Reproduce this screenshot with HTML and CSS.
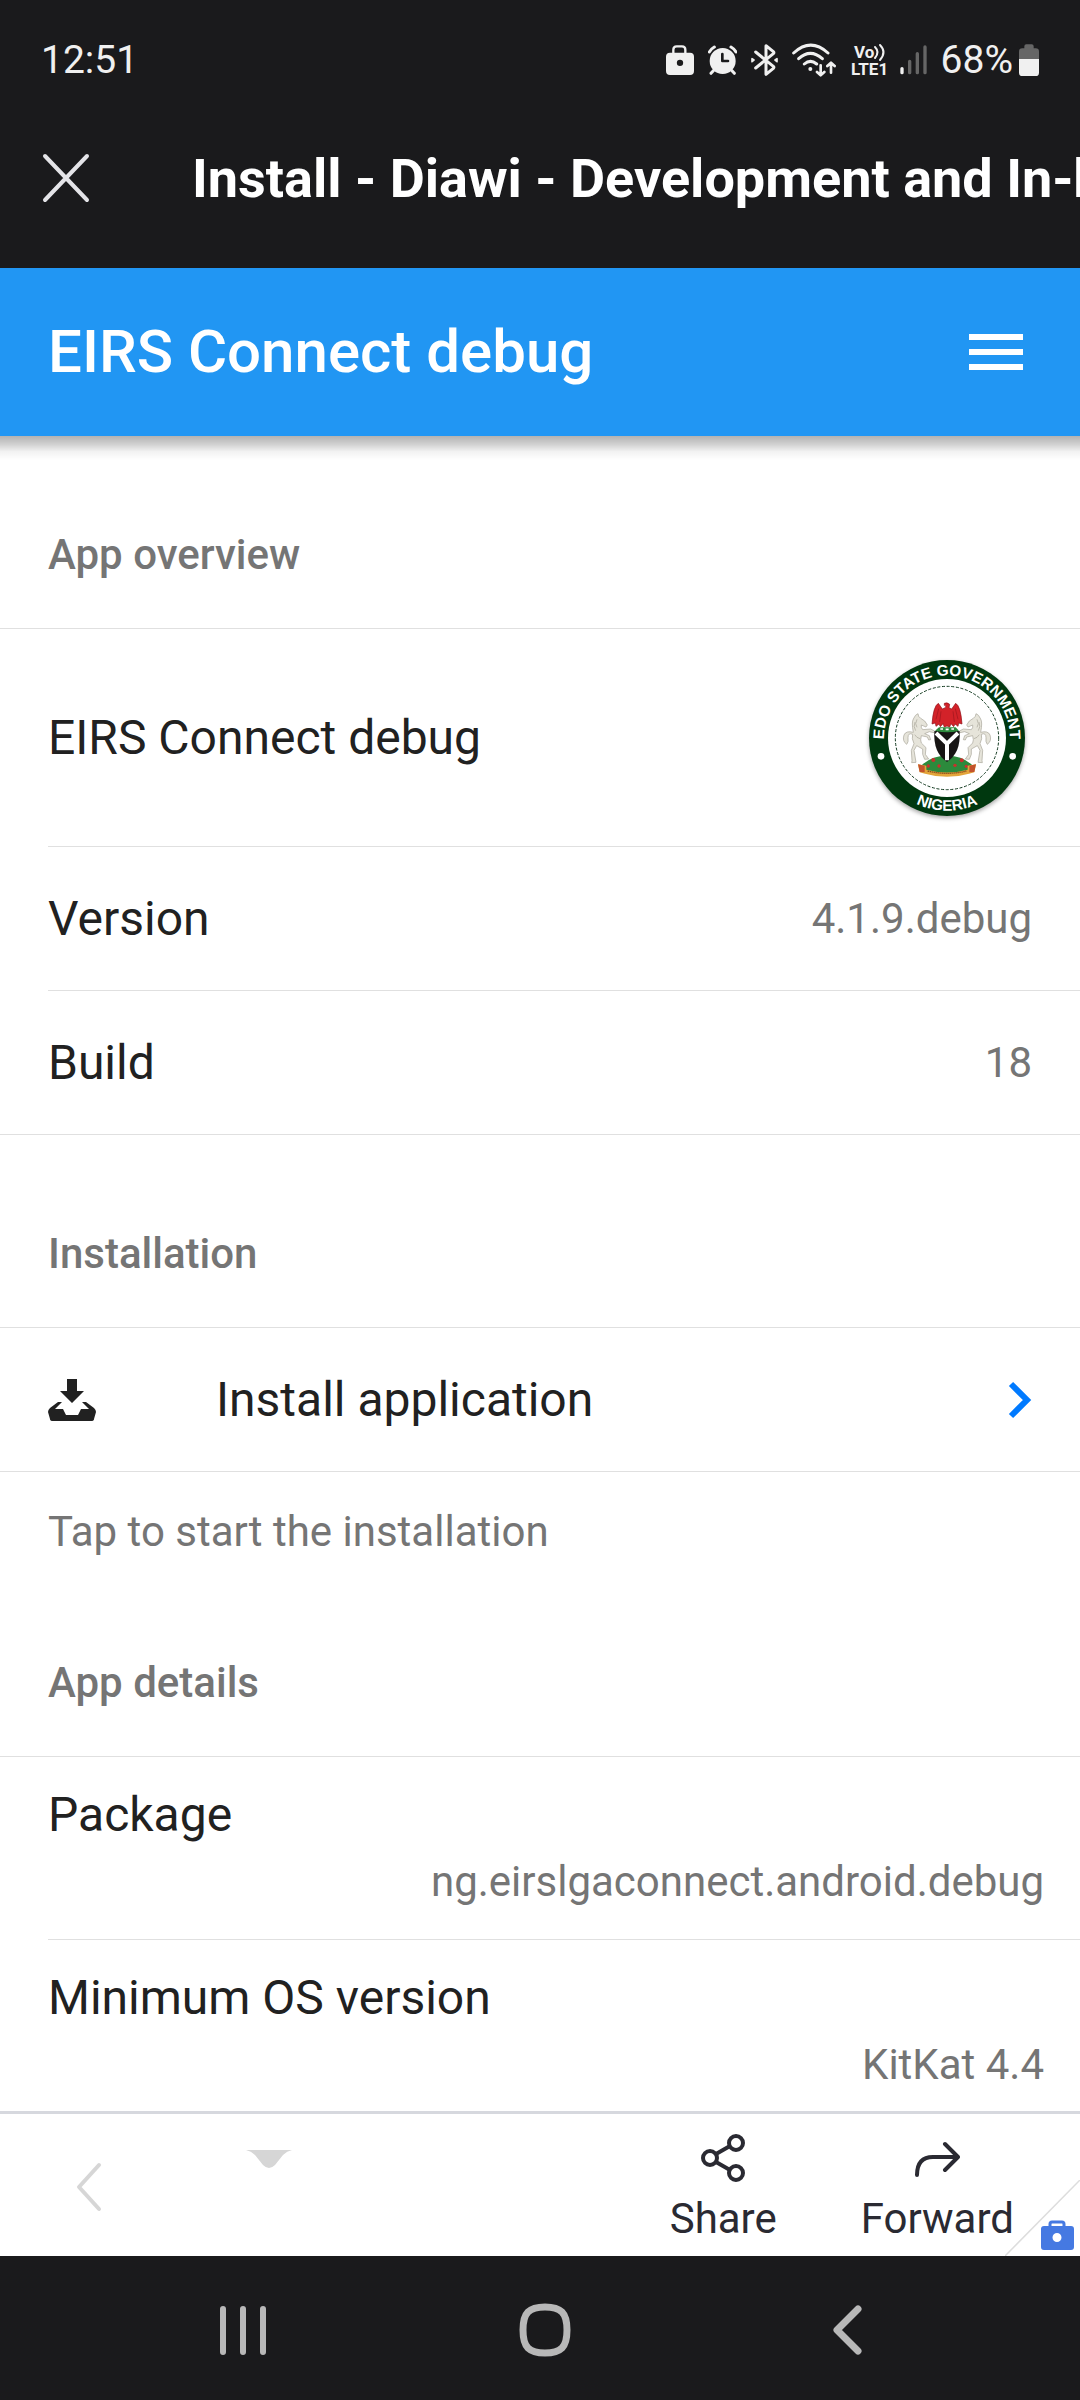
FILE: index.html
```html
<!DOCTYPE html>
<html lang="en">

<head>
  <meta charset="UTF-8" />
  <meta name="viewport" content="width=device-width, initial-scale=1.0" />
  <title>Install - Diawi - Development and In-house Apps Wireless Installation</title>
  <link rel="stylesheet" href="styles.css">
</head>

<body>
  <div class="status-bar">
    <span class="status-time">12:51</span>
    <div class="status-icons">
      <!-- work profile -->
      <svg width="28" height="30" viewBox="75 78 84 90" fill="none">
        <path d="M97 104V92q0-10 10-10h16q10 0 10 10v12" stroke="#f0f0f0" stroke-width="7" />
        <path fill="#f0f0f0" fill-rule="evenodd" d="M87 101h60q12 0 12 12v43q0 12-12 12H87q-12 0-12-12v-43q0-12 12-12zM117 122a9.500 9.500 0 1 0 0 19a9.500 9.500 0 1 0 0-19z" />
      </svg>
      <!-- alarm -->
      <svg width="29" height="30" viewBox="204 78 87 90" fill="none" stroke-linecap="round">
        <circle cx="248" cy="126" r="39" fill="#f0f0f0" />
        <path d="M208 99q6-10 15-15M273 84q9 5 15 15M220 155l-7 8M276 155l7 8" stroke="#f0f0f0" stroke-width="9" />
        <path d="M247 105v21h17" stroke="#1a1a1c" stroke-width="8" stroke-linejoin="round" />
      </svg>
      <!-- bluetooth -->
      <svg width="27" height="32" viewBox="338 74 81 96" fill="none" stroke="#f0f0f0" stroke-width="9" stroke-linejoin="round" stroke-linecap="round">
        <path d="M352 98l53 43q3 3 0 6l-22 18V79l22 18q3 3 0 6l-53 43" />
        <path d="M341 118v9l6-5zM416 118v9l-6-5z" stroke-width="5" fill="#f0f0f0" />
      </svg>
      <!-- wifi -->
      <svg width="44" height="34" viewBox="461 70 132 102" fill="none" stroke="#f0f0f0" stroke-linecap="round" stroke-linejoin="round">
        <path d="M466 100q51-47 103 0M481 117q35-32 71 0M498 133q18-16 37 0" stroke-width="9" />
        <circle cx="516" cy="148" r="6" fill="#f0f0f0" stroke="none" />
        <path d="M547 137v29M536 157l11 10l11-10M578 159v-29M567 139l11-10l11 10" stroke-width="8" />
      </svg>
      <!-- volte -->
      <svg class="volte" width="40" height="44" viewBox="0 -5 40 44" fill="#f0f0f0">
        <text x="4" y="15">Vo</text>
        <path d="M25 4q5 5 0 11M30 2q7 7 0 15" fill="none" stroke="#f0f0f0" stroke-width="2" stroke-linecap="round" />
        <text x="1" y="32">LTE1</text>
      </svg>
      <!-- signal -->
      <svg width="27" height="30" viewBox="774 77 81 90" stroke-width="10" stroke-linecap="round">
        <path d="M780 148v12" stroke="#f0f0f0" />
        <path d="M803 126v34M826 103v57M849 83v77" stroke="#666" />
      </svg>
      <div class="battery">
        <span>68%</span>
        <svg width="20" height="32" viewBox="1137 75 60 96">
          <path d="M1137 120V98q0-10 10-10h6v-6q0-6 6-6h16q6 0 6 6v6h6q10 0 10 10v22z" fill="#666" />
          <path d="M1137 120h60v41q0 10-10 10h-40q-10 0-10-10z" fill="#f0f0f0" />
        </svg>
      </div>
    </div>
  </div>

  <header class="title-bar">
    <button class="icon-btn" aria-label="Close">
      <svg width="48" height="50" viewBox="0 0 48 50" fill="none" stroke="#e4e4e8" stroke-width="4" stroke-linecap="round">
        <path d="M3 3l42 44M45 3L3 47" />
      </svg>
    </button>
    <p class="page-title">Install - Diawi - Development and In-house Apps Wireless Installation</p>
  </header>

  <nav class="navbar">
    <h1 class="navbar-title">EIRS Connect debug</h1>
    <button class="icon-btn" aria-label="Menu">
      <svg width="54" height="36" viewBox="0 0 54 36" fill="#fff">
        <path d="M0 0h54v6H0zM0 15h54v6H0zM0 30h54v6H0z" />
      </svg>
    </button>
  </nav>

  <main class="content">
    <h2 class="block-title">App overview</h2>
    <ul class="list">
      <li class="item item-app">
        <span>EIRS Connect debug</span>
        <svg class="app-logo" width="164" height="164" viewBox="0 0 492 492">
          <defs>
            <path id="ring-top" d="M63 295a189 189 0 1 1 366 0" />
            <path id="ring-bottom" d="M28 246a218 218 0 0 0 436 0" />
          </defs>
          <circle class="logo-shadow" cx="246" cy="246" r="234" fill="#00380f" />
          <circle cx="246" cy="246" r="177" fill="#fff" />
          <circle cx="246" cy="246" r="155" fill="none" stroke="#12391f" stroke-width="3" stroke-dasharray="9 5" />
          <g fill="#fff" class="logo-text" text-anchor="middle">
            <text><textPath href="#ring-top" startOffset="50%">EDO STATE GOVERNMENT</textPath></text>
            <text><textPath href="#ring-bottom" startOffset="50%">NIGERIA</textPath></text>
          </g>
          <circle cx="48" cy="301" r="10" fill="#fff" />
          <circle cx="443" cy="301" r="10" fill="#fff" />
          <!-- ground and banner -->
          <path d="M164 334q30-35 82-35t82 35q-15 26-82 24q-67 2-82-24z" fill="#2c8a3c" />
          <g fill="#c9302c">
            <circle cx="205" cy="312" r="6" /><circle cx="190" cy="330" r="5" /><circle cx="222" cy="330" r="5" />
            <circle cx="270" cy="328" r="5" /><circle cx="290" cy="313" r="6" /><circle cx="304" cy="331" r="5" />
          </g>
          <path d="M159 325l25 4v12q62 17 124 0v-12l25-4l-5 24l-16 4q-66 19-132 0l-16-4z" fill="#e3a53a" />
          <path d="M159 325l20 4v20l-15-1zM333 325l-20 4v20l15-1z" fill="#c3532c" />
          <path d="M188 345q58 14 116 0" fill="none" stroke="#8a4a1c" stroke-width="4" stroke-dasharray="4 2" />
          <!-- horses -->
          <g id="horse" fill="#e6e4da" stroke="#a7a598" stroke-width="2" stroke-linejoin="round">
            <path d="M161 181l6 6q14 6 20 20l-4 6l-14-6q-2 8 4 14l24-2l12 6l-2 5l-14-3l-14 6l14 6l4 12l-6 1l-4-9l-18-4q-4 14 0 22l14 14l-2 20l10 14l-12 1l-6-15v-16l-18-10l-8 14l6 36l-13 1l1-6l-2-31l8-20q-8-16-4-28q-14-6-14 10q2 14-4 20q-14-10-8-28q6-14 28-8q-6-30 0-40q6-14 14-16z" />
            <path d="M156 190q-8 14 0 24M150 198q-6 14 2 26M149 236q6 10 16 12" fill="none" />
          </g>
          <use href="#horse" transform="translate(492 0) scale(-1 1)" />
          <!-- shield -->
          <path d="M208 226q38-10 76 0q4 65-38 92q-42-27-38-92z" fill="#171514" />
          <path d="M213 231l33 32l33-32M246 263v50" fill="none" stroke="#fff" stroke-width="12" />
          <!-- eagle -->
          <path d="M222 214h50l10 10q-35 10-72 0z" fill="#2c8a3c" />
          <path d="M226 219h8M242 220h9M259 219h8" stroke="#fff" stroke-width="5" />
          <path d="M238 142q8-4 16 3l-2 10l8 4l12-17q15 8 19 62l-10-3l-2 10l-9-7l-4 8l-8-9l-4 10l-8-3l-8 3l-4-10l-8 9l-4-8l-9 7l-2-10l-10 3q4-54 19-62l12 17l9-4q5-6-3-7z" fill="#d32229" stroke="#8c1118" stroke-width="2" />
          <path d="M221 158l-8 32M228 166l-4 32M271 158l8 32M264 166l4 32" stroke="#9c151c" stroke-width="2" />
        </svg>
      </li>
      <li class="item">
        <span>Version</span>
        <span class="item-after">4.1.9.debug</span>
      </li>
      <li class="item">
        <span>Build</span>
        <span class="item-after">18</span>
      </li>
    </ul>

    <h2 class="block-title">Installation</h2>
    <div class="list">
      <a class="item item-link" href="#install">
        <svg width="48" height="42" viewBox="0 0 48 42" fill="#212121">
          <path d="M19 0h10v12h7L24 24L12 12h7z" />
          <path d="M10 23h4l-7 7h8l3 6h12l3-6h8l-7-7h4l8 6q2 2 2 4l-2 7q0 2-3 2H5q-3 0-3-2l-2-7q0-2 2-4z" />
        </svg>
        <span class="item-label">Install application</span>
        <svg width="24" height="38" viewBox="0 0 24 38" fill="none" stroke="#007aff" stroke-width="6">
          <path d="M3 3l16 16L3 35" />
        </svg>
      </a>
    </div>
    <p class="block-footer">Tap to start the installation</p>

    <h2 class="block-title">App details</h2>
    <ul class="list">
      <li class="item item-stacked">
        <span>Package</span>
        <span class="item-after">ng.eirslgaconnect.android.debug</span>
      </li>
      <li class="item item-stacked">
        <span>Minimum OS version</span>
        <span class="item-after">KitKat 4.4</span>
      </li>
    </ul>
  </main>

  <footer class="toolbar">
    <button class="tool tool-back" aria-label="Back">
      <svg width="26" height="50" viewBox="0 0 26 50" fill="none" stroke="#d6d6d6" stroke-width="4" stroke-linecap="round" stroke-linejoin="round">
        <path d="M23 3L3 25l20 22" />
      </svg>
    </button>
    <button class="tool tool-more" aria-label="More">
      <svg width="46" height="18" viewBox="0 0 46 18" fill="#d6d6d6">
        <path d="M0 0h46q-5 1-9 5l-8 10q-6 6-12 0L9 5Q5 1 0 0z" />
      </svg>
    </button>
    <button class="tool tool-share">
      <svg width="44" height="48" viewBox="0 0 44 48" fill="none" stroke="#2a2a32" stroke-width="4">
        <circle cx="9" cy="24" r="7" /><circle cx="35" cy="9" r="7" /><circle cx="35" cy="39" r="7" />
        <path d="M15 20l14-8M15 28l14 8" />
      </svg>
      <span>Share</span>
    </button>
    <button class="tool tool-forward">
      <svg width="46" height="48" viewBox="0 0 46 48" fill="none" stroke="#2a2a32" stroke-width="4" stroke-linecap="round" stroke-linejoin="round">
        <path d="M3 41q0-18 16-18h24M31 10l13 13l-13 13" />
      </svg>
      <span>Forward</span>
    </button>
    <svg class="work-badge" width="75" height="76" viewBox="0 0 75 76">
      <path d="M75 0v76H0z" fill="#fff" />
      <path d="M75 0L0 76" stroke="#ddd" stroke-width="1.500" />
      <path d="M45 48v-4q0-2 2-2h10q2 0 2 2v4" fill="none" stroke="#4579e2" stroke-width="3" />
      <path fill="#4579e2" fill-rule="evenodd" d="M39 46h27q3 0 3 3v18q0 3-3 3H39q-3 0-3-3V49q0-3 3-3zM52 53a4 4 0 1 0 0 9a4 4 0 1 0 0-9z" />
    </svg>
  </footer>

  <div class="system-nav">
    <button class="icon-btn" aria-label="Recent apps">
      <svg width="48" height="52" viewBox="0 0 48 52" stroke="#b8b8b8" stroke-width="6" stroke-linecap="round">
        <path d="M4 5v43M24 5v43M44 5v43" />
      </svg>
    </button>
    <button class="icon-btn" aria-label="Home">
      <svg width="52" height="54" viewBox="0 0 52 54" fill="none" stroke="#b8b8b8" stroke-width="7">
        <path d="M26 4Q38 4 43 9T48 27Q48 40 43 45T26 50Q14 50 9 45T4 27Q4 14 9 9T26 4z" />
      </svg>
    </button>
    <button class="icon-btn" aria-label="System back">
      <svg width="39" height="52" viewBox="0 0 39 52" fill="none" stroke="#b8b8b8" stroke-width="7" stroke-linecap="round" stroke-linejoin="round">
        <path d="M35 5L14 26l21 21" />
      </svg>
    </button>
  </div>
</body>

</html>
```
FILE: styles.css
```css
:root {
  --color-system: #1a1a1c;
  --color-primary: #2196f3;
  --color-text: #212121;
  --color-muted: #757575;
  --color-divider: #e0e0e0;
  --color-tool: #2a2a32;
  --font-base: Roboto, "Liberation Sans", sans-serif;
  --gutter: 48px;
}

* {
  box-sizing: border-box;
  margin: 0;
  padding: 0;
}

body {
  display: flex;
  flex-direction: column;
  height: 100vh;
  font-family: var(--font-base);
  font-size: 48px;
  color: var(--color-text);
  background-color: #fff;
}

svg {
  display: block;
  flex-shrink: 0;
}

button {
  border: none;
  background: none;
  font-family: inherit;
  cursor: pointer;
}

.icon-btn {
  flex-shrink: 0;
}

/* status bar */
.status-bar {
  display: flex;
  justify-content: space-between;
  align-items: center;
  height: 120px;
  flex-shrink: 0;
  padding: 0 41px;
  background-color: var(--color-system);
  color: #f0f0f0;
  font-size: 39px;
}

.status-icons {
  display: flex;
  align-items: center;
  gap: 14px;
}

.battery {
  display: flex;
  align-items: center;
  gap: 6px;
}

.volte {
  margin-right: -4px;
  font-size: 17px;
  font-weight: 700;
}

/* browser title */
.title-bar {
  display: flex;
  align-items: center;
  gap: 102px;
  height: 148px;
  flex-shrink: 0;
  padding: 0 0 32px 42px;
  overflow: hidden;
  background-color: var(--color-system);
}

.page-title {
  color: #fff;
  font-size: 54px;
  font-weight: 700;
  white-space: nowrap;
}

/* page navbar */
.navbar {
  position: relative;
  z-index: 1;
  display: flex;
  justify-content: space-between;
  align-items: center;
  height: 168px;
  flex-shrink: 0;
  padding: 0 57px 0 var(--gutter);
  background-color: var(--color-primary);
}

.navbar::after {
  content: "";
  position: absolute;
  top: 100%;
  left: 0;
  right: 0;
  height: 24px;
  background: linear-gradient(rgba(0, 0, 0, 0.3), rgba(0, 0, 0, 0.18) 35%, rgba(0, 0, 0, 0.05) 65%, transparent);
}

.navbar-title {
  padding-bottom: 2px;
  color: #fff;
  font-size: 60px;
  font-weight: 500;
}

.content {
  flex: 1;
  min-height: 0;
  overflow-y: auto;
  scrollbar-width: none;
}

.block-title {
  padding: 95px var(--gutter) 49px;
  color: var(--color-muted);
  font-size: 42px;
  font-weight: 500;
  line-height: 48px;
}

.list {
  list-style: none;
  border-top: 1px solid var(--color-divider);
  border-bottom: 1px solid var(--color-divider);
}

.item {
  display: flex;
  justify-content: space-between;
  align-items: center;
  min-height: 143px;
  margin-left: var(--gutter);
  padding-right: var(--gutter);
}

.item + .item {
  min-height: 144px;
  border-top: 1px solid var(--color-divider);
}

.item-app {
  min-height: 217px;
}

.app-logo {
  margin-right: 3px;
  overflow: visible;
}

.logo-shadow {
  filter: drop-shadow(0 6px 6px rgba(0, 0, 0, 0.35));
}

.logo-text {
  font-family: "Liberation Sans", sans-serif;
  font-size: 46px;
  font-weight: 700;
}

.item-after {
  color: var(--color-muted);
  font-size: 42px;
}

.item-link {
  color: inherit;
  text-decoration: none;
}

.item-label {
  flex: 1;
  padding-left: 120px;
}

.item-stacked {
  flex-direction: column;
  align-items: stretch;
  justify-content: flex-start;
  height: 182px;
  padding: 28px 36px 0 0;
  line-height: 60px;
}

.item-stacked .item-after {
  text-align: right;
  line-height: 74px;
}

.block-footer {
  padding: 36px var(--gutter) 8px;
  color: var(--color-muted);
  font-size: 42px;
  line-height: 48px;
}

/* browser toolbar */
.toolbar {
  position: relative;
  display: flex;
  align-items: flex-start;
  height: 145px;
  flex-shrink: 0;
  border-top: 3px solid #d6d8de;
  background-color: #fff;
}

.tool {
  display: flex;
  flex-direction: column;
  align-items: center;
  gap: 12px;
  color: var(--color-tool);
  font-size: 42px;
}

.tool-back {
  padding: 48px 72px 0 76px;
}

.tool-more {
  padding: 36px 72px 0;
  margin-right: auto;
}

.tool-share,
.tool-forward {
  padding-top: 20px;
}

.tool-forward {
  margin: 0 66px 0 84px;
}

.work-badge {
  position: absolute;
  right: 0;
  bottom: 0;
}

/* system navigation */
.system-nav {
  display: flex;
  justify-content: space-between;
  align-items: center;
  height: 144px;
  flex-shrink: 0;
  padding: 4px 218px 0 219px;
  background-color: var(--color-system);
}
```
